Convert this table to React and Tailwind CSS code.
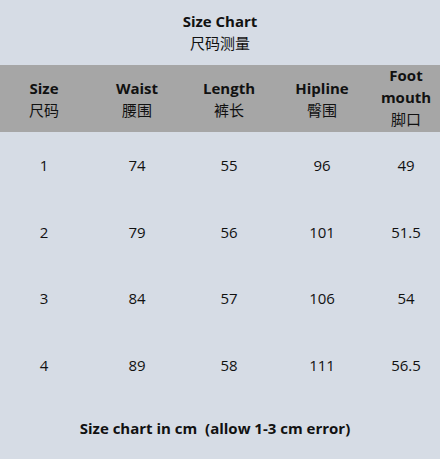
const cols = [
  { en: ['Size'], zh: '尺码' },
  { en: ['Waist'], zh: '腰围' },
  { en: ['Length'], zh: '裤长' },
  { en: ['Hipline'], zh: '臀围' },
  { en: ['Foot', 'mouth'], zh: '脚口' },
]

const rows = [
  ['1', '74', '55', '96', '49'],
  ['2', '79', '56', '101', '51.5'],
  ['3', '84', '57', '106', '54'],
  ['4', '89', '58', '111', '56.5'],
]

const grid = 'grid grid-cols-[88px_98px_86px_100px_68px]'

export default function App() {
  return (
    <div
      className="w-[440px] h-[459px] bg-[#d6dce5] text-[#111] text-[15px] leading-[22px]"
      style={{ fontFamily: '"Open Sans", "Noto Sans CJK SC", sans-serif' }}
    >
      <div className="h-[65px] pt-[10px] text-center">
        <div className="h-[22px] font-bold">Size Chart</div>
        <div className="h-[22px]">尺码测量</div>
      </div>

      <div className={`${grid} h-[67px] bg-[#a6a6a6] items-center text-center`}>
        {cols.map((c) => (
          <div key={c.zh} className={c.en.length > 1 ? '-mt-[3px]' : ''}>
            {c.en.map((t) => (
              <div key={t} className="h-[22px] font-bold">{t}</div>
            ))}
            <div className="h-[22px]">{c.zh}</div>
          </div>
        ))}
      </div>

      {rows.map((r) => (
        <div key={r[0]} className={`${grid} h-[66.5px] items-center text-center`}>
          {r.map((v, i) => (
            <div key={i}>{v}</div>
          ))}
        </div>
      ))}

      <div className="h-[59px] flex items-center justify-center pr-[10px] font-bold">
        Size chart in cm&nbsp;&nbsp;(allow 1-3 cm error)
      </div>
    </div>
  )
}
